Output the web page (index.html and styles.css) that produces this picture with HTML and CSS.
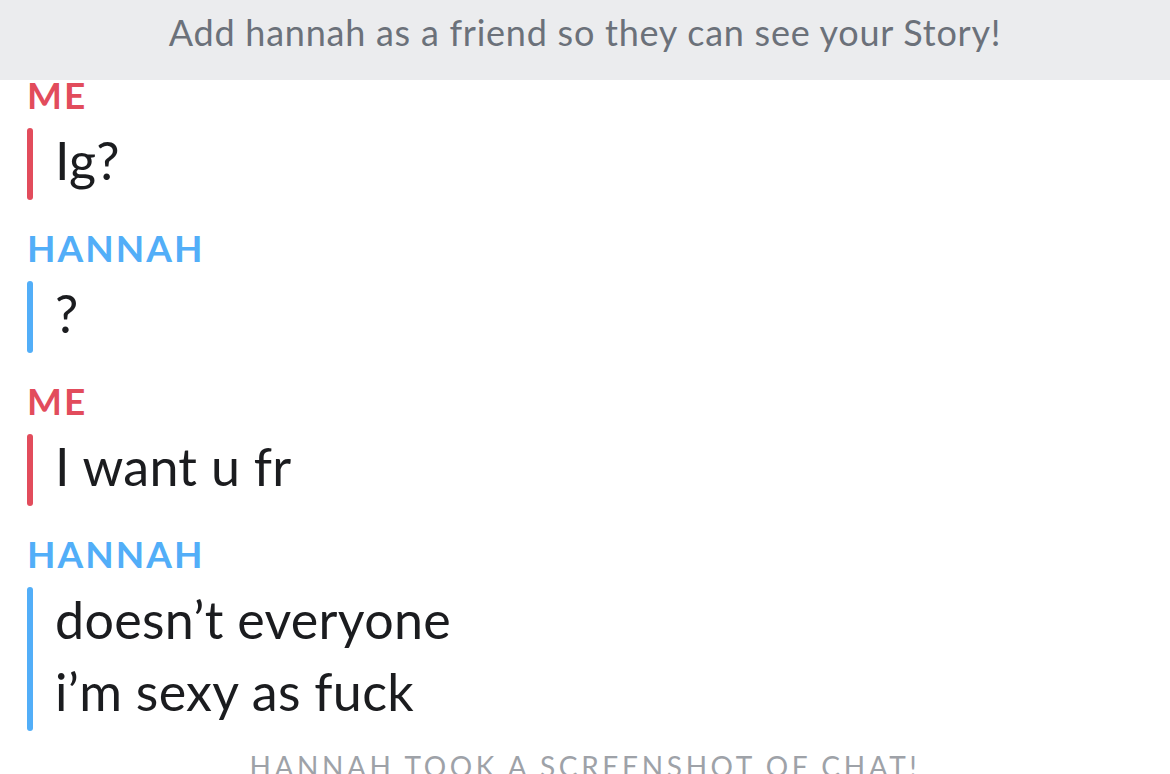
FILE: index.html
```html
<!DOCTYPE html>
<html lang="en">
<head>
  <meta charset="UTF-8">
  <meta name="viewport" content="width=device-width, initial-scale=1.0">
  <title>Chat</title>
  <link rel="stylesheet" href="styles.css">
</head>
<body>
  <div class="story-banner">Add hannah as a friend so they can see your Story!</div>

  <div class="chat">
    <div class="msg me">
      <div class="sender">ME</div>
      <div class="bubble"><p>Ig?</p></div>
    </div>
    <div class="msg them">
      <div class="sender">HANNAH</div>
      <div class="bubble"><p>?</p></div>
    </div>
    <div class="msg me">
      <div class="sender">ME</div>
      <div class="bubble"><p>I want u fr</p></div>
    </div>
    <div class="msg them">
      <div class="sender">HANNAH</div>
      <div class="bubble">
        <p>doesn’t everyone</p>
        <p>i’m sexy as fuck</p>
      </div>
    </div>
  </div>

  <div class="chat-notice">HANNAH TOOK A SCREENSHOT OF CHAT!</div>
</body>
</html>
```

FILE: styles.css
```css
/* Base */
body {
  margin: 0;
  font-family: 'Lato', 'Noto Sans', sans-serif;
  background: #fff;
  color: #1b1c1f;
  overflow: hidden;
}

/* Top banner */
.story-banner {
  height: 80px;
  background: #ebecee;
  color: #6b717a;
  font-size: 36px;
  line-height: 64px;
  letter-spacing: 0.75px;
  text-align: center;
}

/* Chat list */
.chat {
  padding-left: 27px;
}

.msg {
  margin-top: 33px;
}

.msg:first-child {
  margin-top: 0;
}

.sender {
  font-size: 37px;
  font-weight: 700;
  line-height: 30px;
  letter-spacing: 2px;
  margin-bottom: 18px;
}

.bubble {
  position: relative;
  display: flow-root;
  padding-left: 28px;
}

.bubble::before {
  content: '';
  position: absolute;
  left: 0;
  top: 0;
  bottom: 0;
  width: 6px;
  border-radius: 3px;
}

.bubble p {
  margin: -4px 0 4px;
  font-size: 52px;
  line-height: 72px;
  letter-spacing: 0.3px;
}

.bubble p + p {
  margin-top: -4px;
}

.me .sender { color: #e24c5c; }
.me .bubble::before { background: #e24c5c; }
.them .sender { color: #52aef8; }
.them .bubble::before { background: #52aef8; }

/* Bottom notice */
.chat-notice {
  margin-top: 18px;
  text-align: center;
  color: #9ea2a8;
  font-size: 28px;
  letter-spacing: 3.6px;
}
```
